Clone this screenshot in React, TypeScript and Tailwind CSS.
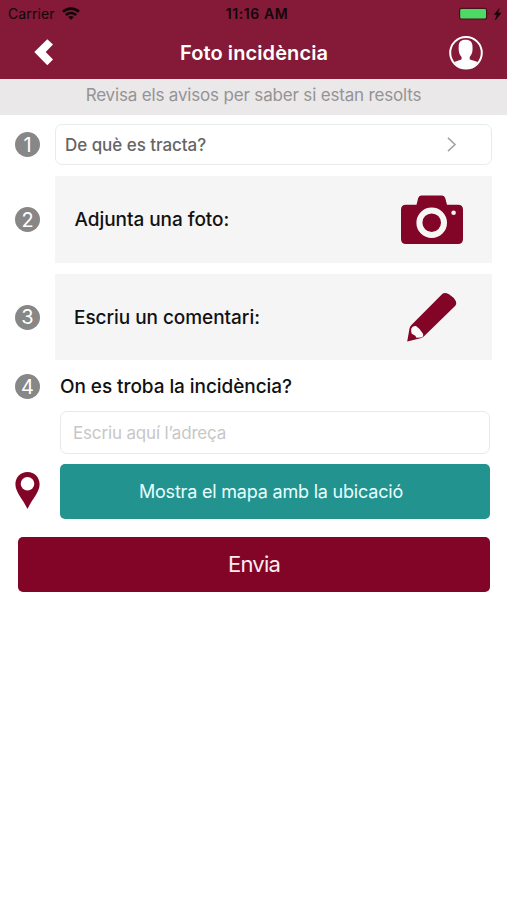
import type { ReactNode } from "react";

function WifiIcon() {
  return (
    <svg className="h-[13px] w-[18px]" viewBox="0 0 18 13" fill="none" stroke="#12060a" strokeWidth="2.6">
      <path d="M1 4.800C5.400.6 12.600.6 17 4.800" />
      <path d="M3.900 8c2.900-2.700 7.300-2.700 10.200 0" />
      <path d="M6.200 10c1.500-1.300 4.100-1.300 5.600 0L9 12.800z" fill="#12060a" stroke="none" />
    </svg>
  );
}

function StatusBar() {
  return (
    <div className="grid h-[27px] grid-cols-3 items-center text-[#12060a]">
      <div className="flex items-center gap-[7px] pl-[8px]">
        <span className="text-[14px] leading-none tracking-[0.12px]">Carrier</span>
        <WifiIcon />
      </div>
      <span className="pl-[7px] text-center text-[14px] leading-none font-semibold tracking-[0.6px]">11:16 AM</span>
      <div className="flex items-center justify-end pr-[5px]">
        <svg className="h-[14px] w-[43px]" viewBox="0 0 43 14">
          <rect x=".6" y="1.400" width="27" height="10.800" rx="2" fill="#4cd964" stroke="#4a1020" strokeWidth="1.2" />
          <path d="M29.500 5q1.600 1.500 0 3z" fill="#4a1020" />
          <path d="M40.300 1.500l-5 6h2.900L36.300 13l5.700-7H38.700z" fill="#12060a" stroke="#12060a" strokeWidth=".6" />
        </svg>
      </div>
    </div>
  );
}

function StepNumber({ children }: { children: ReactNode }) {
  return (
    <span className="flex size-[25px] shrink-0 items-center justify-center rounded-full bg-[#878787] text-[20px] leading-none text-white">
      {children}
    </span>
  );
}

function CameraIcon() {
  return (
    <svg className="h-[50px] w-[62px]" viewBox="0 0 62 50">
      <path
        d="M20 .5h21q2.500 0 3.200 2.500l1.800 6.700h11q5 0 5 5v29.300q0 5-5 5H5q-5 0-5-5V14.700q0-5 5-5h10.500l1.700-6.700Q18 .5 20 .5z"
        fill="#820427"
      />
      <circle cx="30.700" cy="27.700" r="12.300" fill="#820427" stroke="#f8f5f5" strokeWidth="6" />
      <circle cx="52.600" cy="17.700" r="2.300" fill="#f8f5f5" />
    </svg>
  );
}

function PencilIcon() {
  return (
    <svg className="h-[50px] w-[50px]" viewBox="0 0 50 50">
      <path d="M.2 49.500L2.600 36Q3 34.300 4.400 32.900L35.500 1.700Q38 0 42 2.300Q47 5.300 49 9.500Q49.800 12 48.300 13.700L17 44.200Q15.500 45.800 13.500 46.200z" fill="#820427" />
      <path d="M4.200 36.800Q5.500 33.300 9 34Q13.500 37 16 41.800Q17 45.300 13.500 45.500L9.400 45.700Q8.700 43.500 6.500 42.800Q4.300 42 4.200 40z" fill="#faf8f8" />
    </svg>
  );
}

export default function App() {
  return (
    <div className="min-h-[900px] w-full bg-white font-[Inter,sans-serif]">
      <header className="h-[79px] bg-[#841a37]">
        <StatusBar />
        <div className="flex h-[52px] items-center justify-between pr-[24px] pl-[34px]">
          <svg className="h-[28px] w-[20px]" viewBox="0 0 20 28" fill="white">
            <path d="M.3 13L13.300 .2l5.700 5.300-7.300 7.600 7.300 7.500-5.700 5.700z" />
          </svg>
          <h1 className="pl-[5px] text-[20px] leading-none font-semibold tracking-[0.1px] text-white">Foto incidència</h1>
          <svg className="size-[34px]" viewBox="0 0 34 34">
            <circle cx="17" cy="16.800" r="15.800" fill="#841a37" stroke="white" strokeWidth="2" />
            <path
              d="M16.500 3.800c5 0 7.200 2.600 7 7.400.3 3.600-.3 7.200-2.800 9.800v2.200c1.500 1.200 5.300 1.300 7.900 2.900C23 34.800 11 34.800 5.400 26.100c2.600-1.600 5.700-1.700 7.200-2.900V21c-2.500-2.600-3.200-6.200-2.900-9.800-.2-4.800 1.800-7.400 6.800-7.400z"
              fill="white"
            />
          </svg>
        </div>
      </header>

      <p className="h-[36px] bg-[#eae8e9] pt-[7px] text-center text-[17px] leading-[18px] tracking-[-0.17px] text-[#959394]">
        Revisa els avisos per saber si estan resolts
      </p>

      <main className="flex flex-col pt-[9px] pr-[15px] pl-[15px]">
        <div className="flex items-center gap-[15px]">
          <StepNumber>1</StepNumber>
          <button className="flex h-[41px] flex-1 items-center justify-between rounded-[7px] border-[1.5px] border-[#e9ebeb] pr-[34px] pl-[9px] text-[17px] font-medium tracking-[-0.05px] text-[#656565]">
            <span className="pt-[2px]">De què es tracta?</span>
            <svg className="h-[15px] w-[10px]" viewBox="0 0 10 15" fill="none" stroke="#a4a4a4" strokeWidth="1.600">
              <path d="M1 .8l7 6.700-7 6.700" />
            </svg>
          </button>
        </div>

        <div className="mt-[11px] flex items-center gap-[15px]">
          <StepNumber>2</StepNumber>
          <div className="flex h-[87px] flex-1 items-center justify-between bg-[#f5f5f5] pr-[29px] pl-[19.500px]">
            <span className="pt-[2px] text-[19px] font-medium tracking-[-0.05px] text-[#111]">Adjunta una foto:</span>
            <CameraIcon />
          </div>
        </div>

        <div className="mt-[11px] flex items-center gap-[15px]">
          <StepNumber>3</StepNumber>
          <div className="flex h-[86px] flex-1 items-center justify-between bg-[#f5f5f5] pr-[35px] pl-[19px]">
            <span className="pt-[2px] text-[19px] font-medium tracking-[-0.05px] text-[#111]">Escriu un comentari:</span>
            <PencilIcon />
          </div>
        </div>

        <div className="mt-[14px] flex items-center gap-[20px]">
          <StepNumber>4</StepNumber>
          <h2 className="text-[19px] leading-[25px] font-medium tracking-[-0.07px] text-[#111]">On es troba la incidència?</h2>
        </div>

        <div className="mt-[12px] mr-[2px] ml-[45px] flex">
          <input
            className="h-[43px] w-full rounded-[7px] border-[1.5px] border-[#e9e9e9] px-[12px] text-[17px] tracking-[-0.16px] outline-none placeholder:text-[#c7c7c7]"
            placeholder="Escriu aquí l’adreça"
          />
        </div>

        <div className="mt-[10px] mr-[2px] flex items-center gap-[20px]">
          <svg className="mb-[2px] h-[37px] w-[25px] shrink-0" viewBox="0 0 25 37">
            <path d="M12.500 0C5.500 0 .4 5.300.4 12.200c0 8 7.500 14.800 12.100 24.800C17.100 27 24.600 20.200 24.600 12.200 24.600 5.300 19.500 0 12.500 0z" fill="#820427" />
            <circle cx="12.500" cy="11.800" r="6.800" fill="white" />
          </svg>
          <button className="h-[55px] flex-1 rounded-[5px] bg-[#239390] pr-[8px] text-[18px] tracking-[-0.2px] text-[#e8ffff]">
            Mostra el mapa amb la ubicació
          </button>
        </div>

        <button className="mt-[18px] mr-[2px] ml-[3px] h-[55px] rounded-[5px] bg-[#820427] text-[22px] tracking-[-0.8px] text-[#fbecef]">
          Envia
        </button>
      </main>
    </div>
  );
}
